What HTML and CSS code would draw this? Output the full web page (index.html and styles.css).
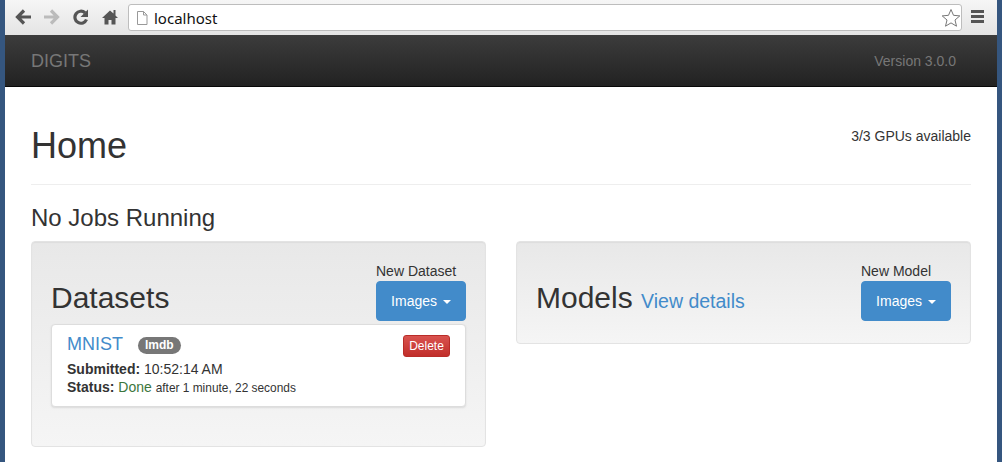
FILE: index.html
```html
<!DOCTYPE html>
<html lang="en">
<head>
<meta charset="utf-8">
<title>DIGITS</title>
<link rel="stylesheet" href="styles.css">
</head>
<body>
<div class="window">
  <div class="toolbar">
    <svg class="tool" width="18" height="16" viewBox="0 0 18 16"><path d="M17 8H4.500M10 1.500 3.500 8 10 14.500" fill="none" stroke="#555" stroke-width="3.200"/></svg>
    <svg class="tool" width="18" height="16" viewBox="0 0 18 16"><path d="M1 8h12.500M8 1.500 14.500 8 8 14.500" fill="none" stroke="#bbb" stroke-width="3.200"/></svg>
    <svg class="tool" width="18" height="16" viewBox="0 0 18 16"><path d="M14.500 10.500A6 6 0 1 1 13 3.800" fill="none" stroke="#555" stroke-width="3.200"/><path d="M16 .5v7.500H8.500z" fill="#555"/></svg>
    <svg class="tool" width="18" height="16" viewBox="0 0 18 16"><path d="M9 1.500 1 9h2.500v6.500h4V11h3v4.500h4V9H17l-2.500-2.500V1h-2v3.500z" fill="#555"/></svg>
    <div class="omnibox">
      <svg class="page-icon" width="12" height="14" viewBox="0 0 12 14"><path d="M1.500.5h6l3.500 3.500v9.500h-9.500zM7.500.5V4H11" fill="#fff" stroke="#999"/></svg>
      <span class="url">localhost</span>
      <svg class="star" width="20" height="20" viewBox="0 0 20 20"><path d="M10 1.500l2.500 5.800 6.300.6-4.800 4.100 1.500 6.200-5.500-3.300-5.500 3.300 1.500-6.200L1.200 7.900l6.300-.6z" fill="#fff" stroke="#777"/></svg>
    </div>
    <div class="menu"><i></i><i></i><i></i></div>
  </div>
  <nav class="navbar">
    <a class="brand">DIGITS</a>
    <span class="version">Version 3.0.0</span>
  </nav>
  <main class="content">
    <header class="page-header">
      <h1>Home</h1>
      <span class="gpus">3/3 GPUs available</span>
    </header>
    <h2>No Jobs Running</h2>
    <div class="columns">
      <section class="well datasets">
        <div class="well-head">
          <h3>Datasets</h3>
          <div class="new">
            <span class="new-label">New Dataset</span>
            <button class="btn">Images <b class="caret"></b></button>
          </div>
        </div>
        <article class="card">
          <div class="card-title">
            <a class="job">MNIST</a>
            <span class="badge">lmdb</span>
            <button class="delete">Delete</button>
          </div>
          <div class="line"><b>Submitted:</b> 10:52:14 AM</div>
          <div class="line"><b>Status:</b> <span class="done">Done</span> <small>after 1 minute, 22 seconds</small></div>
        </article>
      </section>
      <section class="well models">
        <div class="well-head">
          <h3 class="models-title">Models <a class="details">View details</a></h3>
          <div class="new">
            <span class="new-label">New Model</span>
            <button class="btn">Images <b class="caret"></b></button>
          </div>
        </div>
      </section>
    </div>
  </main>
</div>
</body>
</html>
```
FILE: styles.css
```css
* { box-sizing: border-box; }
html, body { margin: 0; height: 100%; overflow: hidden; }
body { background: #35567f; font-family: "Liberation Sans", Arial, sans-serif; color: #333; font-size: 14px; }
.window { margin: 0 5px; height: 462px; background: #fff; overflow: hidden; }
.toolbar { height: 35px; display: flex; align-items: center; padding: 0 0 2px 9px; background: linear-gradient(#f6f6f6, #e4e4e4); }
.tool { margin-right: 11px; flex: none; }
.omnibox { width: 834px; height: 27px; margin: 2px 0 0 -2px; display: flex; align-items: center; background: #fff; border: 1px solid #bdbdbd; border-radius: 3px; padding: 0 0 0 7px; }
.page-icon { flex: none; }
.url { flex: 1; margin-left: 6px; font-family: "Noto Sans", "DejaVu Sans", sans-serif; font-size: 15px; color: #111; }
.star { flex: none; }
.menu { margin-left: 9px; display: flex; flex-direction: column; gap: 2px; }
.menu i { display: block; width: 13px; height: 3px; background: #555; }
.navbar { height: 52px; display: flex; align-items: center; justify-content: space-between; padding: 0 41px 0 26px; background: linear-gradient(#3c3c3c, #222); border-bottom: 1px solid #080808; }
.brand { font-size: 18px; color: #777; margin-top: 2px; }
.version { font-size: 14px; color: #777; }
.content { padding: 0 26px; }
.page-header { display: flex; justify-content: space-between; height: 98px; padding-top: 39px; border-bottom: 1px solid #eee; }
h1 { margin: 0; font-size: 36px; font-weight: 400; line-height: 40px; }
.gpus { font-size: 14px; line-height: 20px; }
h2 { margin: 20px 0 10px; font-size: 24px; font-weight: 400; line-height: 26px; }
.columns { display: grid; grid-template-columns: 455px 455px; gap: 30px; align-items: start; }
.well { padding: 19px; background: linear-gradient(#e8e8e8, #f5f5f5); border: 1px solid #e3e3e3; border-radius: 4px; box-shadow: inset 0 1px 1px rgba(0,0,0,.05); }
.datasets { height: 206px; }
.models { height: 103px; }
.well-head { display: flex; justify-content: space-between; align-items: flex-end; }
h3 { margin: 0 0 7px; font-size: 30px; font-weight: 400; line-height: 33px; }
.models-title { margin-bottom: 3px; }
.details { font-size: 19.5px; color: #428bca; }
.new { display: flex; flex-direction: column; width: 90px; }
.new-label { line-height: 20px; white-space: nowrap; }
.btn { width: 90px; height: 40px; border: 1px solid #428bca; background: #428bca; color: #fff; border-radius: 4px; font: 14px "Liberation Sans", Arial, sans-serif; padding: 0; }
.caret { display: inline-block; width: 0; height: 0; margin-left: 2px; vertical-align: middle; border-top: 4px solid #fff; border-left: 4px solid transparent; border-right: 4px solid transparent; }
.card { margin-top: 3px; height: 83px; padding: 9px 15px 0; background: #fff; border: 1px solid #ddd; border-radius: 4px; box-shadow: 0 1px 2px rgba(0,0,0,.1); }
.card-title { display: flex; align-items: flex-start; height: 26px; }
.job { font-size: 18px; line-height: 20px; color: #428bca; }
.badge { margin: 3px 0 0 15px; height: 17px; padding: 0 7px; border-radius: 9px; background: #777; color: #fff; font-size: 12px; font-weight: 700; line-height: 17px; }
.delete { margin: 1px 0 0 auto; width: 47px; height: 22px; padding: 0; background: linear-gradient(#d9534f, #c12e2a); border: 1px solid #b92c28; border-radius: 3px; color: #fff; font: 12px "Liberation Sans", Arial, sans-serif; }
.line { line-height: 18px; }
.done { color: #3c763d; }
small { font-size: 11.9px; }
```
